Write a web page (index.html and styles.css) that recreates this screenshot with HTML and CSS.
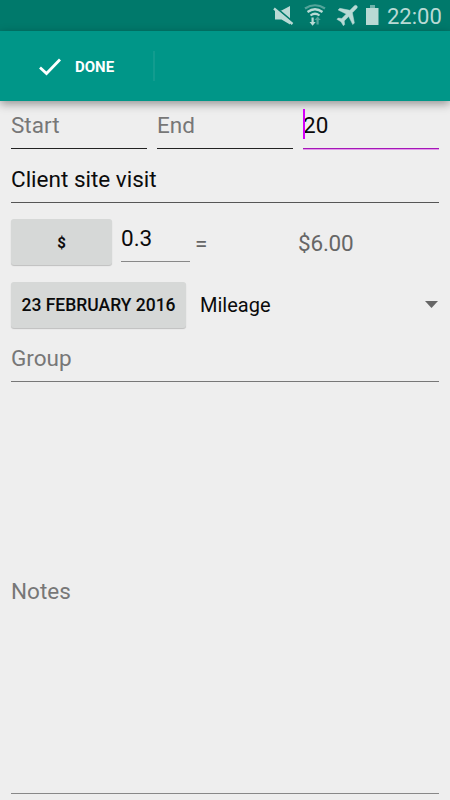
FILE: index.html
```html
<!DOCTYPE html>
<html lang="en">
<head>
<meta charset="utf-8">
<title>Mileage expense</title>
<link rel="stylesheet" href="styles.css">
</head>
<body>
<div class="screen">
  <header class="status">
    <svg class="status-icons" width="112" height="31" viewBox="270 0 112 31" fill="#b9dad5">
      <path d="M275 10.500h6.500l8.500-4.500v18.500l-8.500-5H275z"/>
      <path d="M274.500 6.500l19 16" stroke="#00796b" stroke-width="2" fill="none"/>
      <path d="M274 8.500l18.500 15.500" stroke="#b9dad5" stroke-width="2.400" fill="none"/>
      <g fill="none" stroke="#b9dad5" stroke-width="2.200">
        <path d="M305 8.500q10-6.500 20 0" opacity=".45"/>
        <path d="M307.500 12q7.500-5.500 15 0M310.500 15.500q4.500-3.500 9 0"/>
      </g>
      <path d="M311.500 17.500h2.200V22h2l-3.100 3.800-3.100-3.800h2z"/>
      <path d="M316.500 24.500h2.200V20h2l-3.100-3.500-3.100 3.500h2z" opacity=".45"/>
      <path transform="translate(348.700 14) rotate(45) scale(1.150) translate(-12 -12)" stroke="#b9dad5" stroke-width=".4" d="M21 16v-2l-7.500-5V3.500a1.500 1.500 0 0 0-3 0V9L3 14v2l7.500-2.500V19l-2.500 2v1.500l4-1 4 1V21l-2.500-2v-5.500z"/>
      <path d="M366 8h12.500v17H366z"/>
      <path d="M370 5h5v3h-5z" opacity=".6"/>
    </svg>
    <span class="clock">22:00</span>
  </header>
  <div class="toolbar">
    <svg class="check" width="24" height="20" viewBox="0 0 24 20"><path d="M2 10.500l6.500 6L22 2.500" fill="none" stroke="#fff" stroke-width="2.800"/></svg>
    <span class="done">DONE</span>
    <i class="divider"></i>
  </div>
  <main class="form">
    <div class="row trip">
      <div class="field hint dark">Start</div>
      <div class="field hint dark">End</div>
      <div class="field focus">20<i class="caret"></i></div>
    </div>
    <div class="field description">Client site visit</div>
    <div class="row amount">
      <button class="btn currency">$</button>
      <div class="field rate">0.3</div>
      <span class="equals">=</span>
      <span class="total">$6.00</span>
    </div>
    <div class="row details">
      <button class="btn date">23 FEBRUARY 2016</button>
      <div class="spinner"><span>Mileage</span><i class="arrow"></i></div>
    </div>
    <div class="field hint group">Group</div>
    <div class="field hint notes">Notes</div>
  </main>
</div>
</body>
</html>
```

FILE: styles.css
```css
* { box-sizing: border-box; }
body { margin: 0; background: #eee; font-family: Roboto, sans-serif; font-size: 22.5px; line-height: 26px; color: #0b0b0b; }
.screen { width: 450px; height: 800px; overflow: hidden; display: flex; flex-direction: column; }
.status { height: 31px; background: #00796b; display: flex; align-items: center; justify-content: flex-end; padding-right: 9px; flex: none; }
.status-icons { margin-right: 5px; }
.clock { width: 54px; font-size: 22px; color: #b9dad5; padding-top: 3px; white-space: nowrap; }
.toolbar { height: 70px; flex: none; background: #009688; display: flex; align-items: center; padding-left: 38px; box-shadow: 0 3px 9px rgba(0,0,0,.38); }
.check { margin-top: 1px; }
.done { margin-left: 13px; width: 78px; font-size: 15px; font-weight: 700; color: #fff; padding-top: 1px; }
.divider { width: 2px; height: 30px; background: #129c8f; }
.form { flex: 1; padding: 0 11px; display: flex; flex-direction: column; }
.row { display: flex; flex: none; }
.field { position: relative; border-bottom: 1px solid #555; white-space: nowrap; }
.hint { color: #777; }
.trip { gap: 10px; height: 48px; }
.trip .field { flex: 1; padding-top: 11px; }
.trip .dark { border-color: #222; }
.trip .focus { border-bottom: 1px solid #a616b8; box-shadow: 0 1px #df9be8; height: 48px; }
.caret { position: absolute; left: 0; top: 8px; width: 2px; height: 30px; background: #d500f9; }
.description { height: 54px; padding-top: 17px; flex: none; }
.amount { height: 46px; margin-top: 16px; }
.btn { height: 46px; padding: 0; border: 0; border-radius: 3px; background: #d6d8d7; color: #0b0b0b; font: 500 17.5px/46px Roboto, sans-serif; box-shadow: 0 1px 1px rgba(0,0,0,.2); flex: none; }
.currency { width: 101px; font-size: 15px; font-weight: 700; line-height: 48px; }
.rate { width: 69px; height: 43px; margin-left: 9px; padding-top: 6px; border-color: #888; }
.equals { margin-left: 5px; width: 103px; color: #666; padding-top: 11px; }
.total { color: #666; padding-top: 11px; letter-spacing: -.2px; }
.details { height: 46px; margin-top: 17px; }
.date { width: 175px; }
.spinner { flex: 1; display: flex; align-items: center; justify-content: space-between; padding-left: 14px; font-size: 20px; }
.arrow { width: 13px; height: 7px; background: #666; clip-path: polygon(0 0, 100% 0, 50% 100%); margin: -1px 1px 0 0; }
.group { height: 54px; padding-top: 17px; border-color: #777; flex: none; }
.notes { height: 412px; flex: none; display: flex; align-items: center; border-color: #888; padding-top: 6px; }
```
